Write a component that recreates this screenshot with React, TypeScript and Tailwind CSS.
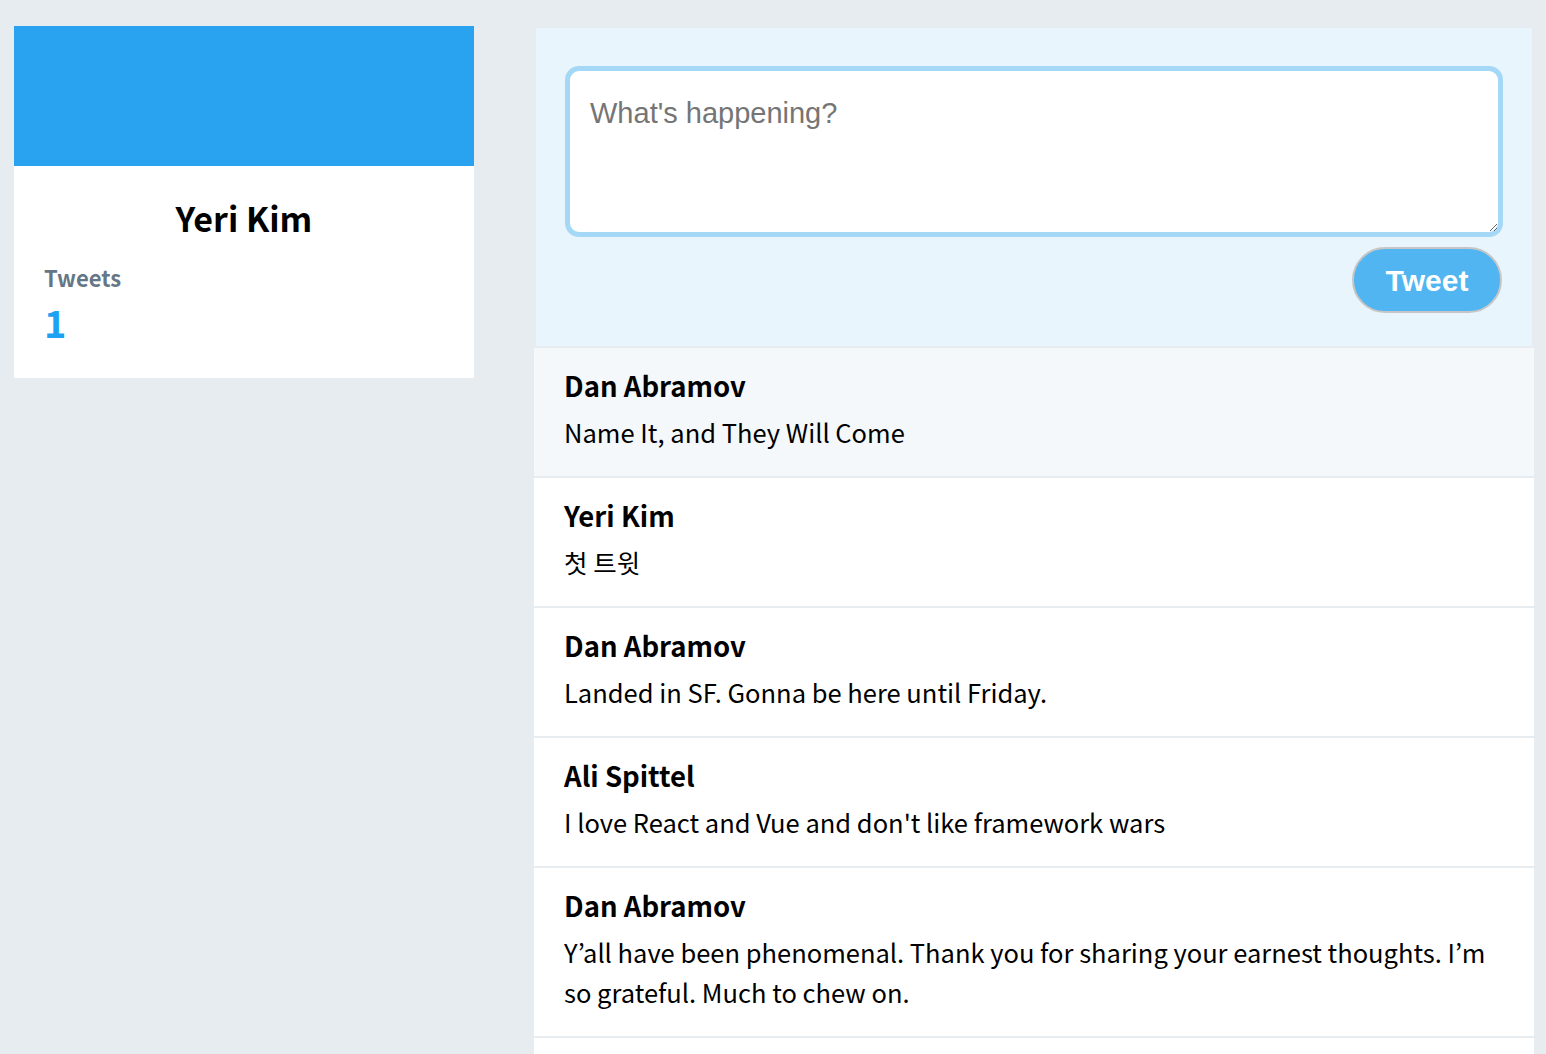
import React from 'react';

interface Tweet {
  author: string;
  text: string;
}

const tweets: Tweet[] = [
  { author: 'Dan Abramov', text: 'Name It, and They Will Come' },
  { author: 'Yeri Kim', text: '첫 트윗' },
  { author: 'Dan Abramov', text: 'Landed in SF. Gonna be here until Friday.' },
  { author: 'Ali Spittel', text: "I love React and Vue and don't like framework wars" },
  {
    author: 'Dan Abramov',
    text: 'Y’all have been phenomenal. Thank you for sharing your earnest thoughts. I’m so grateful. Much to chew on.',
  },
];

const ProfileCard = () => (
  <div className="w-[460px] shrink-0 self-start bg-white">
    <div className="h-[140px] bg-[#29a3ef]" />
    <div className="px-[30px] pt-[30px] pb-[34px]">
      <h2 className="text-center text-[34px] leading-[44px] font-bold text-black">Yeri Kim</h2>
      <div className="mt-[24px] text-[22px] leading-[26px] font-bold text-[#657786]">Tweets</div>
      <div className="mt-[10px] text-[38px] leading-[44px] font-bold text-[#1da1f2]">1</div>
    </div>
  </div>
);

const Composer = () => (
  <div className="mx-[2px] mt-[2px] bg-[#e8f5fd] px-[29px] pt-[38px] pb-[33px]">
    <textarea
      placeholder="What's happening?"
      className="block h-[171px] w-full rounded-[14px] border-[5px] border-[#a5d8f6] bg-white px-[20px] py-[24px] text-[29px] leading-[36px] text-black outline-none placeholder:text-[#757575] [font-family:'Liberation_Sans',Arial,sans-serif]"
    />
    <div className="mt-[10px] flex justify-end">
      <button className="mr-[1px] h-[66px] w-[150px] rounded-full border-2 border-[#c6c6c6] bg-[#50b5f0] text-[30px] font-bold text-white [font-family:'Liberation_Sans',Arial,sans-serif]">
        Tweet
      </button>
    </div>
  </div>
);

const TweetRow = ({ tweet, active }: { tweet: Tweet; active?: boolean }) => (
  <div className={`px-[30px] pt-[20px] pb-[24px] ${active ? 'bg-[#f5f8fa]' : 'bg-white'}`}>
    <div className="text-[27.5px] leading-[34px] font-bold text-black">{tweet.author}</div>
    <div className="mt-[10px] text-[25.5px] leading-[40px] text-black">{tweet.text}</div>
  </div>
);

export default function App() {
  return (
    <div className="min-h-screen bg-[#e6ecf0] [font-family:'Noto_Sans_CJK_KR','Noto_Sans',sans-serif]">
      <div className="flex items-start gap-[60px] pl-[14px] pr-[12px] pt-[26px]">
        <ProfileCard />
        <div className="flex w-[1000px] flex-col gap-[2px]">
          <Composer />
          {tweets.map((t, i) => (
            <TweetRow key={i} tweet={t} active={i === 0} />
          ))}
          <div className="h-[128px] bg-white" />
        </div>
      </div>
    </div>
  );
}
